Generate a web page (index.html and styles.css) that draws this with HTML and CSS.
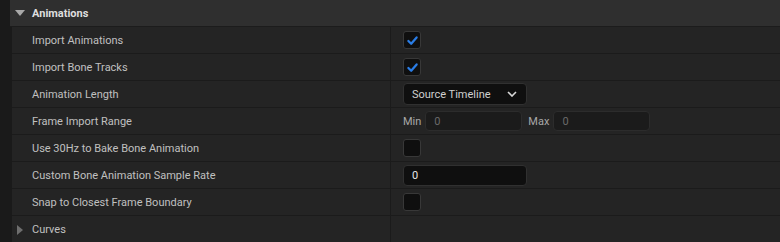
FILE: index.html
```html
<!DOCTYPE html>
<html lang="en">
<head>
  <meta charset="UTF-8" />
  <title>Animations</title>
  <link rel="stylesheet" href="styles.css">
</head>
<body>
  <div class="panel">
    <div class="cat open">
      <span class="arrow down"></span><span class="cat-name">Animations</span>
    </div>

    <div class="row">
      <div class="name">Import Animations</div>
      <div class="value"><span class="check on"><svg viewBox="0 0 12 12"><path d="M2.2 6.4 L4.8 9 L9.8 3.2"/></svg></span></div>
    </div>
    <div class="row">
      <div class="name">Import Bone Tracks</div>
      <div class="value"><span class="check on"><svg viewBox="0 0 12 12"><path d="M2.2 6.4 L4.8 9 L9.8 3.2"/></svg></span></div>
    </div>
    <div class="row">
      <div class="name">Animation Length</div>
      <div class="value">
        <div class="combo">Source Timeline<svg class="chev" viewBox="0 0 10 6"><path d="M1 1 L5 5 L9 1"/></svg></div>
      </div>
    </div>
    <div class="row">
      <div class="name">Frame Import Range</div>
      <div class="value range">
        <span class="lbl">Min</span><div class="field dim">0</div>
        <span class="lbl">Max</span><div class="field dim">0</div>
      </div>
    </div>
    <div class="row">
      <div class="name">Use 30Hz to Bake Bone Animation</div>
      <div class="value"><span class="check"></span></div>
    </div>
    <div class="row">
      <div class="name">Custom Bone Animation Sample Rate</div>
      <div class="value"><div class="field wide">0</div></div>
    </div>
    <div class="row">
      <div class="name">Snap to Closest Frame Boundary</div>
      <div class="value"><span class="check"></span></div>
    </div>
    <div class="row sub">
      <div class="name"><span class="arrow right"></span>Curves</div>
      <div class="value"></div>
    </div>
  </div>
</body>
</html>
```

FILE: styles.css
```css
*,*::before,*::after{box-sizing:border-box;margin:0;padding:0}
body{font-family:Roboto,"Liberation Sans",Arial,sans-serif;font-size:11px;background:#1a1a1a;color:#c0c0c0;overflow:hidden}
.panel{display:flex;flex-direction:column;padding-left:10px}
/* category header */
.cat{height:27px;display:flex;align-items:center;background:#2f2f2f;border-bottom:1px solid #1c1c1c;padding-left:5px}
.cat-name{font-weight:700;color:#dedede;margin-left:7px}
.arrow{display:inline-block;width:0;height:0}
.arrow.down{border-left:5px solid transparent;border-right:5px solid transparent;border-top:6px solid #a8a8a8}
.arrow.right{border-top:5px solid transparent;border-bottom:5px solid transparent;border-left:6px solid #6e6e6e;margin-left:-15px;margin-right:9px}
/* rows */
.row{height:27px;display:flex;margin-left:2px;background:#242424;border-bottom:1px solid #1b1b1b}
.row:last-child{border-bottom:none}
.name{width:379px;display:flex;align-items:center;padding-left:20px;border-right:1px solid #1b1b1b}
.value{flex:1;display:flex;align-items:center;padding-left:12px}
/* widgets */
.check{width:18px;height:18px;border-radius:3px;background:#0f0f0f;border:1px solid #383838;display:flex;align-items:center;justify-content:center}
.check svg{width:13px;height:13px;fill:none;stroke:#2a7de6;stroke-width:2.1;stroke-linecap:round;stroke-linejoin:round}
.combo{width:124px;height:22px;border-radius:4px;background:#0f0f0f;border:1px solid #303030;display:flex;align-items:center;padding-left:8px;color:#d0d0d0}
.chev{width:10px;height:6px;margin-left:16px;fill:none;stroke:#d8d8d8;stroke-width:1.6}
.lbl{color:#a8a8a8;margin-right:4px}
.field{height:20px;border-radius:4px;background:#1b1b1b;border:1px solid #2c2c2c;display:flex;align-items:center;padding-left:8px;color:#e6e6e6}
.field.dim{width:97px;color:#6a6a6a;margin-right:6px}
.field.wide{width:124px;height:21px;background:#0f0f0f;border-color:#303030}
```
